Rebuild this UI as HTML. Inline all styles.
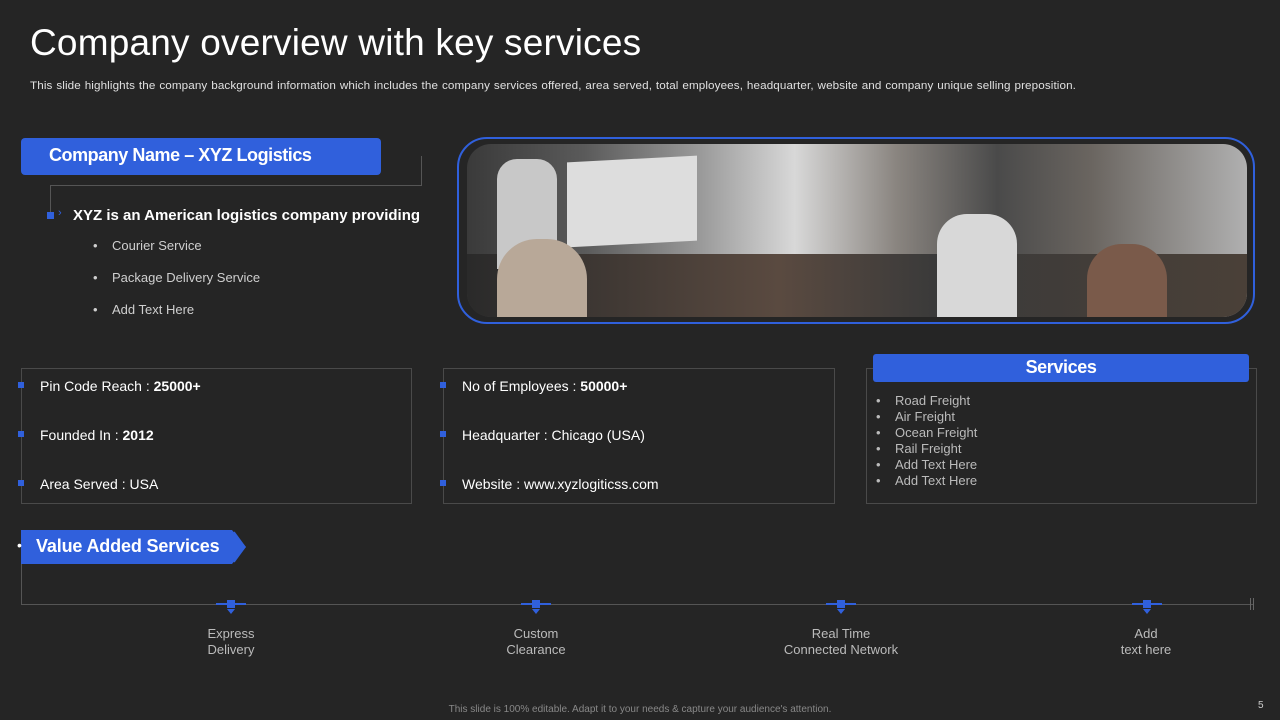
<!DOCTYPE html>
<html><head><meta charset="utf-8"><style>
*{margin:0;padding:0;box-sizing:border-box}
body{width:1280px;height:720px;background:#252525;font-family:"Liberation Sans",sans-serif;color:#fff;position:relative;overflow:hidden}
.a{position:absolute}
.blue{background:#3060dc}
.t{font-size:14px;color:#fff}
.g{color:#cfcfcf;font-size:13px}
.sq{width:6px;height:6px;background:#3060dc}
.box{border:1px solid #4a4a4a}
</style></head><body>
<div class="a" style="left:30px;top:22px;font-size:37px;letter-spacing:0.2px">Company overview with key services</div>
<div class="a" style="left:30px;top:80px;font-size:11px;color:#e0e0e0;letter-spacing:0.1px;word-spacing:0.5px;white-space:nowrap;transform-origin:0 0;transform:scaleX(1.06)">This slide highlights the company background information which includes the company services offered, area served, total employees, headquarter, website and company unique selling preposition.</div>

<div class="a" style="left:50px;top:156px;width:372px;height:30px;border-right:1px solid #555;border-bottom:1px solid #555"></div>
<div class="a" style="left:50px;top:186px;width:1px;height:28px;background:#555"></div>
<div class="a blue" style="left:21px;top:138px;width:360px;height:37px;border-radius:4px;font-weight:bold;font-size:18px;letter-spacing:-0.45px;padding:7px 0 0 28px">Company Name – XYZ Logistics</div>
<div class="a sq" style="left:47px;top:212px;width:7px;height:7px"></div>
<div class="a" style="left:58px;top:207px;color:#3060dc;font-size:11px">›</div>
<div class="a" style="left:73px;top:207px;font-weight:bold;font-size:15px;letter-spacing:0px">XYZ is an American logistics company providing</div>
<div class="a g" style="left:93px;top:230px;line-height:32px">•&nbsp;&nbsp;&nbsp;&nbsp;Courier Service<br>•&nbsp;&nbsp;&nbsp;&nbsp;Package Delivery Service<br>•&nbsp;&nbsp;&nbsp;&nbsp;Add Text Here</div>

<div class="a" style="left:457px;top:137px;width:798px;height:187px;border:2px solid #3060dc;border-radius:30px"></div>
<div class="a" style="left:467px;top:144px;width:780px;height:173px;border-radius:24px;overflow:hidden;background:linear-gradient(90deg,#3a3a3a 0%,#5a5a5a 15%,#9a9a9a 30%,#d8d8d8 42%,#8a8580 55%,#4a4a4a 68%,#6a6560 80%,#b0b0b0 100%)">
 <div class="a" style="left:100px;top:15px;width:130px;height:85px;background:#ddd;transform:skewY(-3deg)"></div>
 <div class="a" style="left:0;top:110px;width:780px;height:63px;background:linear-gradient(90deg,#2a2a2a,#5a4a40 40%,#3a3a3a 60%,#4a4038 100%)"></div>
 <div class="a" style="left:30px;top:15px;width:60px;height:110px;background:#c8c8c8;border-radius:20px 20px 0 0"></div>
 <div class="a" style="left:30px;top:95px;width:90px;height:78px;background:#b8a898;border-radius:40px 40px 0 0"></div>
 <div class="a" style="left:470px;top:70px;width:80px;height:103px;background:#d8d8d8;border-radius:30px 30px 0 0"></div>
 <div class="a" style="left:620px;top:100px;width:80px;height:73px;background:#7a5a4a;border-radius:35px 35px 0 0"></div>
</div>

<div class="a box" style="left:21px;top:368px;width:391px;height:136px"></div>
<div class="a sq" style="left:18px;top:382px"></div><div class="a sq" style="left:18px;top:431px"></div><div class="a sq" style="left:18px;top:480px"></div>
<div class="a t" style="left:40px;top:378px">Pin Code Reach : <b>25000+</b></div>
<div class="a t" style="left:40px;top:427px">Founded In : <b>2012</b></div>
<div class="a t" style="left:40px;top:476px">Area Served : USA</div>

<div class="a box" style="left:443px;top:368px;width:392px;height:136px"></div>
<div class="a sq" style="left:440px;top:382px"></div><div class="a sq" style="left:440px;top:431px"></div><div class="a sq" style="left:440px;top:480px"></div>
<div class="a t" style="left:462px;top:378px">No of Employees : <b>50000+</b></div>
<div class="a t" style="left:462px;top:427px">Headquarter : Chicago (USA)</div>
<div class="a t" style="left:462px;top:476px">Website : www.xyzlogiticss.com</div>

<div class="a box" style="left:866px;top:368px;width:391px;height:136px"></div>
<div class="a blue" style="left:873px;top:354px;width:376px;height:28px;border-radius:3px;text-align:center;font-weight:bold;font-size:18px;letter-spacing:-0.4px;padding-top:3px">Services</div>
<div class="a g" style="left:876px;top:393px;line-height:16px;color:#bbb">•&nbsp;&nbsp;&nbsp;&nbsp;Road Freight<br>•&nbsp;&nbsp;&nbsp;&nbsp;Air Freight<br>•&nbsp;&nbsp;&nbsp;&nbsp;Ocean Freight<br>•&nbsp;&nbsp;&nbsp;&nbsp;Rail Freight<br>•&nbsp;&nbsp;&nbsp;&nbsp;Add Text Here<br>•&nbsp;&nbsp;&nbsp;&nbsp;Add Text Here</div>

<div class="a" style="left:21px;top:546px;width:1px;height:58px;background:#555"></div>
<div class="a" style="left:21px;top:604px;width:1233px;height:1px;background:#555"></div>
<div class="a" style="left:1250px;top:598px;width:1px;height:12px;background:#666"></div>
<div class="a" style="left:1253px;top:598px;width:1px;height:12px;background:#666"></div>
<svg class="a" style="left:21px;top:530px" width="226" height="34"><polygon points="0,0 211,0 225,17 211,34 0,34" fill="#3060dc"/><polyline points="213,2 224,17 213,32" fill="none" stroke="#3060dc" stroke-width="1.5"/></svg>
<div class="a" style="left:17px;top:537px;font-size:14px">•</div>
<div class="a" style="left:36px;top:536px;font-weight:bold;font-size:18px;letter-spacing:-0.15px">Value Added Services</div>

<div class="a" style="left:216px;top:603px;width:30px;height:2px;background:#3060dc"></div><div class="a" style="left:227px;top:600px;width:8px;height:8px;background:#3060dc"></div><div class="a" style="left:227px;top:609px;border:4px solid transparent;border-top:5px solid #3060dc"></div>
<div class="a" style="left:521px;top:603px;width:30px;height:2px;background:#3060dc"></div><div class="a" style="left:532px;top:600px;width:8px;height:8px;background:#3060dc"></div><div class="a" style="left:532px;top:609px;border:4px solid transparent;border-top:5px solid #3060dc"></div>
<div class="a" style="left:826px;top:603px;width:30px;height:2px;background:#3060dc"></div><div class="a" style="left:837px;top:600px;width:8px;height:8px;background:#3060dc"></div><div class="a" style="left:837px;top:609px;border:4px solid transparent;border-top:5px solid #3060dc"></div>
<div class="a" style="left:1132px;top:603px;width:30px;height:2px;background:#3060dc"></div><div class="a" style="left:1143px;top:600px;width:8px;height:8px;background:#3060dc"></div><div class="a" style="left:1143px;top:609px;border:4px solid transparent;border-top:5px solid #3060dc"></div>

<div class="a g" style="left:151px;top:626px;width:160px;text-align:center;line-height:16px;color:#bbb">Express<br>Delivery</div>
<div class="a g" style="left:456px;top:626px;width:160px;text-align:center;line-height:16px;color:#bbb">Custom<br>Clearance</div>
<div class="a g" style="left:741px;top:626px;width:200px;text-align:center;line-height:16px;color:#bbb">Real Time<br>Connected Network</div>
<div class="a g" style="left:1066px;top:626px;width:160px;text-align:center;line-height:16px;color:#bbb">Add<br>text here</div>

<div class="a" style="left:0;top:704px;width:1280px;text-align:center;font-size:10px;color:#888">This slide is 100% editable. Adapt it to your needs &amp; capture your audience's attention.</div>
<div class="a" style="left:1258px;top:700px;font-size:10px;color:#ccc">5</div>
</body></html>
